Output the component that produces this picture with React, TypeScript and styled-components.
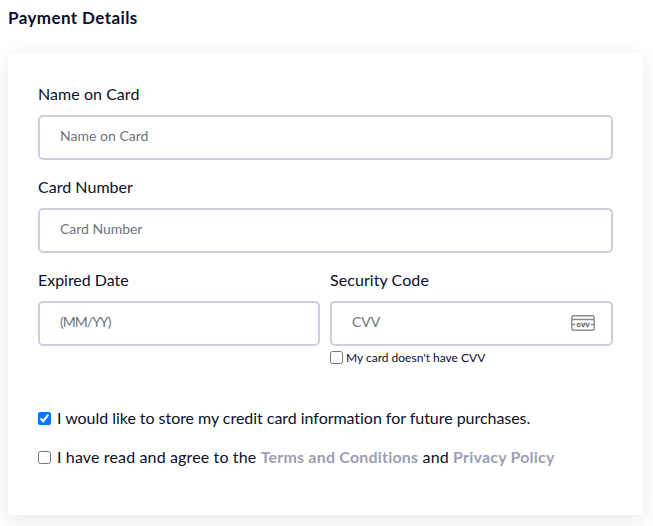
import React from 'react';
import styled, { createGlobalStyle } from 'styled-components';

const GlobalStyle = createGlobalStyle`
  * { box-sizing: border-box; }
  body {
    margin: 0;
    background: #fff;
    color: #0a0f2c;
    font-family: Lato, "Liberation Sans", sans-serif;
    font-variant-ligatures: none;
    overflow: hidden;
  }
`;

const Page = styled.main`
  height: 526px;
  padding: 8px 10px 0 8px;
  overflow: hidden;
`;

const Title = styled.h1`
  margin: 0 0 25px;
  height: 20px;
  font-size: 17px;
  line-height: 20px;
  font-weight: 700;
  letter-spacing: 0.4px;
`;

const Card = styled.form`
  height: 462px;
  padding: 30px;
  border-radius: 5px;
  background: #fff;
  box-shadow: 0 5px 20px rgba(15, 34, 58, 0.1);
`;

const Row = styled.div<{ $columns?: string }>`
  display: grid;
  grid-template-columns: ${(p) => p.$columns ?? '1fr'};
  gap: 10px;
  height: 93px;
`;

const Label = styled.label<{ $spacing: number }>`
  display: block;
  height: 32px;
  font-size: 16px;
  line-height: 22px;
  letter-spacing: ${(p) => p.$spacing}px;
`;

const InputBox = styled.div`
  display: flex;
  align-items: center;
  height: 45px;
  padding: 0 16px 0 20px;
  border: 2px solid #cdcfde;
  border-radius: 5px;
`;

const Input = styled.input<{ $spacing: number }>`
  flex: 1;
  min-width: 0;
  height: 20px;
  margin-bottom: 4px;
  padding: 0;
  border: 0;
  outline: 0;
  background: transparent;
  font: 14px/20px Lato, "Liberation Sans", sans-serif;
  letter-spacing: ${(p) => p.$spacing}px;
  &::placeholder { color: #6c757d; opacity: 1; }
`;

const Check = styled.input`
  flex: none;
  width: 13px;
  height: 13px;
  margin: 0;
`;

const SmallCheck = styled.label`
  display: flex;
  align-items: center;
  gap: 3px;
  height: 23px;
  font-size: 12px;
  white-space: pre;
`;

const Options = styled.div`
  display: grid;
  grid-auto-rows: 39px;
  margin-top: 37px;
`;

const Option = styled.label`
  display: flex;
  align-items: center;
  gap: 6px;
  font-size: 16px;
  line-height: 24px;
  white-space: nowrap;
`;

const OptionText = styled.span<{ $spacing: number }>`
  padding-bottom: 2px;
  letter-spacing: ${(p) => p.$spacing}px;
`;

const Link = styled.a`
  color: #9c9fb2;
  font-weight: 700;
  letter-spacing: 0.2px;
`;

const Icon = styled.svg`
  flex: none;
  margin-bottom: 1px;
`;

const CvvIcon = () => (
  <Icon width="24" height="16" viewBox="0 0 24 16" fill="none" stroke="#8c8c8c" strokeWidth="1.4">
    <path d="M.8 7.5V2.5Q.8.8 2.5.8H21.5Q23.2.8 23.2 2.5V13.5Q23.2 15.2 21.5 15.2H2.5Q.8 15.2.8 13.5V7.5M.8 4.5H23.2M.8 9.5H4M20 9.5H23.2" />
    <text x="5.6" y="12" fill="#777" stroke="#777" strokeWidth=".35" fontFamily="Liberation Sans, sans-serif" fontSize="8" fontWeight="700" textLength="13" lengthAdjust="spacingAndGlyphs">cvv</text>
  </Icon>
);

interface FieldProps {
  label: string;
  placeholder: string;
  labelSpacing: number;
  inputSpacing: number;
  icon?: React.ReactNode;
  children?: React.ReactNode;
}

const Field = ({ label, placeholder, labelSpacing, inputSpacing, icon, children }: FieldProps) => (
  <div>
    <Label $spacing={labelSpacing}>{label}</Label>
    <InputBox>
      <Input $spacing={inputSpacing} placeholder={placeholder} aria-label={label} />
      {icon}
    </InputBox>
    {children}
  </div>
);

export default function App() {
  return (
    <>
      <GlobalStyle />
      <Page>
        <Title>Payment Details</Title>
        <Card>
          <Row><Field label="Name on Card" placeholder="Name on Card" labelSpacing={0.05} inputSpacing={0.02} /></Row>
          <Row><Field label="Card Number" placeholder="Card Number" labelSpacing={0.03} inputSpacing={-0.03} /></Row>
          <Row $columns="282px 283px">
            <Field label="Expired Date" placeholder="(MM/YY)" labelSpacing={-0.03} inputSpacing={-1} />
            <Field label="Security Code" placeholder="CVV" labelSpacing={0.07} inputSpacing={0} icon={<CvvIcon />}>
              <SmallCheck><Check type="checkbox" />My card doesn't have CVV</SmallCheck>
            </Field>
          </Row>
          <Options>
            <Option>
              <Check type="checkbox" defaultChecked />
              <OptionText $spacing={-0.04}>I would like to store my credit card information for future purchases.</OptionText>
            </Option>
            <Option>
              <Check type="checkbox" />
              <OptionText $spacing={0.14}>I have read and agree to the <Link>Terms and Conditions</Link> and <Link>Privacy Policy</Link></OptionText>
            </Option>
          </Options>
        </Card>
      </Page>
    </>
  );
}
